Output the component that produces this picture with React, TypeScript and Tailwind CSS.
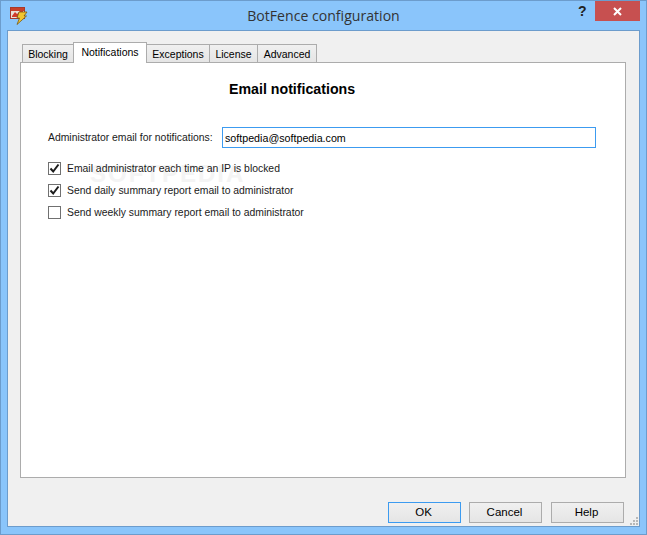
import React from 'react';

const tabs = [
  { label: 'Blocking', width: 'w-[52px]' },
  { label: 'Notifications', width: 'w-[74px]', active: true },
  { label: 'Exceptions', width: 'w-[64px]' },
  { label: 'License', width: 'w-[49px]' },
  { label: 'Advanced', width: 'w-[60px]' },
];

const options = [
  { label: 'Email administrator each time an IP is blocked', checked: true },
  { label: 'Send daily summary report email to administrator', checked: true },
  { label: 'Send weekly summary report email to administrator', checked: false },
];

const AppIcon = () => (
  <svg width="18" height="18" viewBox="0 0 18 18" className="shrink-0">
    <rect x="0.5" y="0.5" width="14" height="11" fill="#e8e0d8" stroke="#a83a2c" />
    <rect x="1" y="1" width="13" height="3" fill="#c8402c" />
    <path d="M2 9 L5 5 L7 7 L10 4 L13 4 L13 6 L9 10 L2 10 Z" fill="#d03a2a" />
    <path d="M9 5 L17 5 L14 9 L16.5 9 L7 17.5 L9.5 11 L7 11 Z" fill="#f2c530" stroke="#7a5a14" strokeWidth="0.8" />
  </svg>
);

const Checkbox = ({ checked }: { checked: boolean }) => (
  <span className="w-[13px] h-[13px] border border-[#707070] bg-white flex items-center justify-center shrink-0">
    {checked && (
      <svg width="11" height="11" viewBox="0 0 11 11">
        <path d="M1.5 5.5 L4.2 8.5 L9.5 1.5" fill="none" stroke="#1c1c1c" strokeWidth="2" />
      </svg>
    )}
  </span>
);

const DialogButton = ({ label, primary }: { label: string; primary?: boolean }) => (
  <button
    type="button"
    className={`w-[73px] h-[21px] border pt-[1px] pr-[2px] text-[11.5px] leading-none text-black bg-gradient-to-b from-[#f0f0f0] to-[#e5e5e5] ${
      primary ? 'border-[#3c9bf0]' : 'border-[#acacac]'
    }`}
  >
    {label}
  </button>
);

const App: React.FC = () => {
  return (
    <div className="w-[647px] h-[535px] flex flex-col bg-[#8ac5fb] border border-[#6c9ccc] overflow-hidden font-['Liberation_Sans',Arial,sans-serif] text-[10.4px] text-[#1a1a1a]">
      {/* title bar */}
      <div className="h-[29px] shrink-0 flex items-start">
        <div className="w-[68px] pl-[9px] pt-[6px]">
          <AppIcon />
        </div>
        <div className="flex-1 text-center pt-[5px] text-[14.1px] leading-[20px] font-['Open_Sans',sans-serif] text-[#333]">
          BotFence configuration
        </div>
        <div className="w-[17px] pt-[3px] text-[14px] leading-[14px] font-bold text-[#222]">?</div>
        <div className="w-[45px] h-[20px] mr-[6px] bg-[#c75050] flex items-center justify-center">
          <svg width="9" height="9" viewBox="0 0 9 9">
            <path d="M1 1 L8 8 M8 1 L1 8" stroke="#fff" strokeWidth="2" />
          </svg>
        </div>
      </div>

      {/* client area */}
      <div className="flex-1 mx-[6px] mb-[7px] border border-[#6c9ccc] bg-[#f0f0f0] flex flex-col px-[12px] relative">
        <div className="flex items-end h-[31px] pl-[2px] shrink-0">
          {tabs.map(tab => (
            <div
              key={tab.label}
              className={`${tab.width} -ml-px first:ml-0 border border-[#acacac] border-b-0 text-center text-[10.5px] text-black whitespace-nowrap ${
                tab.active
                  ? 'h-[21px] bg-white leading-[18px] relative z-10 -mb-px'
                  : 'h-[18px] bg-gradient-to-b from-[#f0f0f0] to-[#e5e5e5] leading-[19px]'
              }`}
            >
              {tab.label}
            </div>
          ))}
        </div>

        <div className="h-[416px] w-[606px] shrink-0 border border-[#acacac] bg-white flex flex-col pl-[27px] relative">
          {/* faint site watermark behind the checkboxes */}
          <span className="absolute left-[69px] top-[99px] text-[24px] leading-none tracking-[2px] font-bold text-[#f4f4f4]">
            SOFTPEDIA
          </span>

          <h1 className="pl-[181px] pt-[18px] text-[14.2px] leading-[16px] font-bold text-black">Email notifications</h1>

          <div className="flex items-center mt-[30px] relative">
            <span className="w-[174px] shrink-0 whitespace-nowrap">Administrator email for notifications:</span>
            <input
              readOnly
              value="softpedia@softpedia.com"
              className="w-[374px] h-[21px] border border-[#3c9bf0] bg-white px-[2px] text-[10.7px] text-black outline-none"
            />
          </div>

          <div className="flex flex-col gap-[9px] mt-[14px] relative">
            {options.map(option => (
              <label key={option.label} className="flex items-center gap-[6px] h-[13px] whitespace-nowrap">
                <Checkbox checked={option.checked} />
                <span>{option.label}</span>
              </label>
            ))}
          </div>
        </div>

        <div className="flex justify-end gap-[8px] pr-[3px] mt-[24px]">
          <DialogButton label="OK" primary />
          <DialogButton label="Cancel" />
          <div className="ml-px">
            <DialogButton label="Help" />
          </div>
        </div>

        {/* resize grip */}
        <svg width="9" height="9" viewBox="0 0 9 9" className="absolute right-0 bottom-0">
          <path d="M6 0h2v2h-2z M3 3h2v2h-2z M6 3h2v2h-2z M0 6h2v2h-2z M3 6h2v2h-2z M6 6h2v2h-2z" fill="#b8b8b8" />
        </svg>
      </div>
    </div>
  );
};

export default App;
